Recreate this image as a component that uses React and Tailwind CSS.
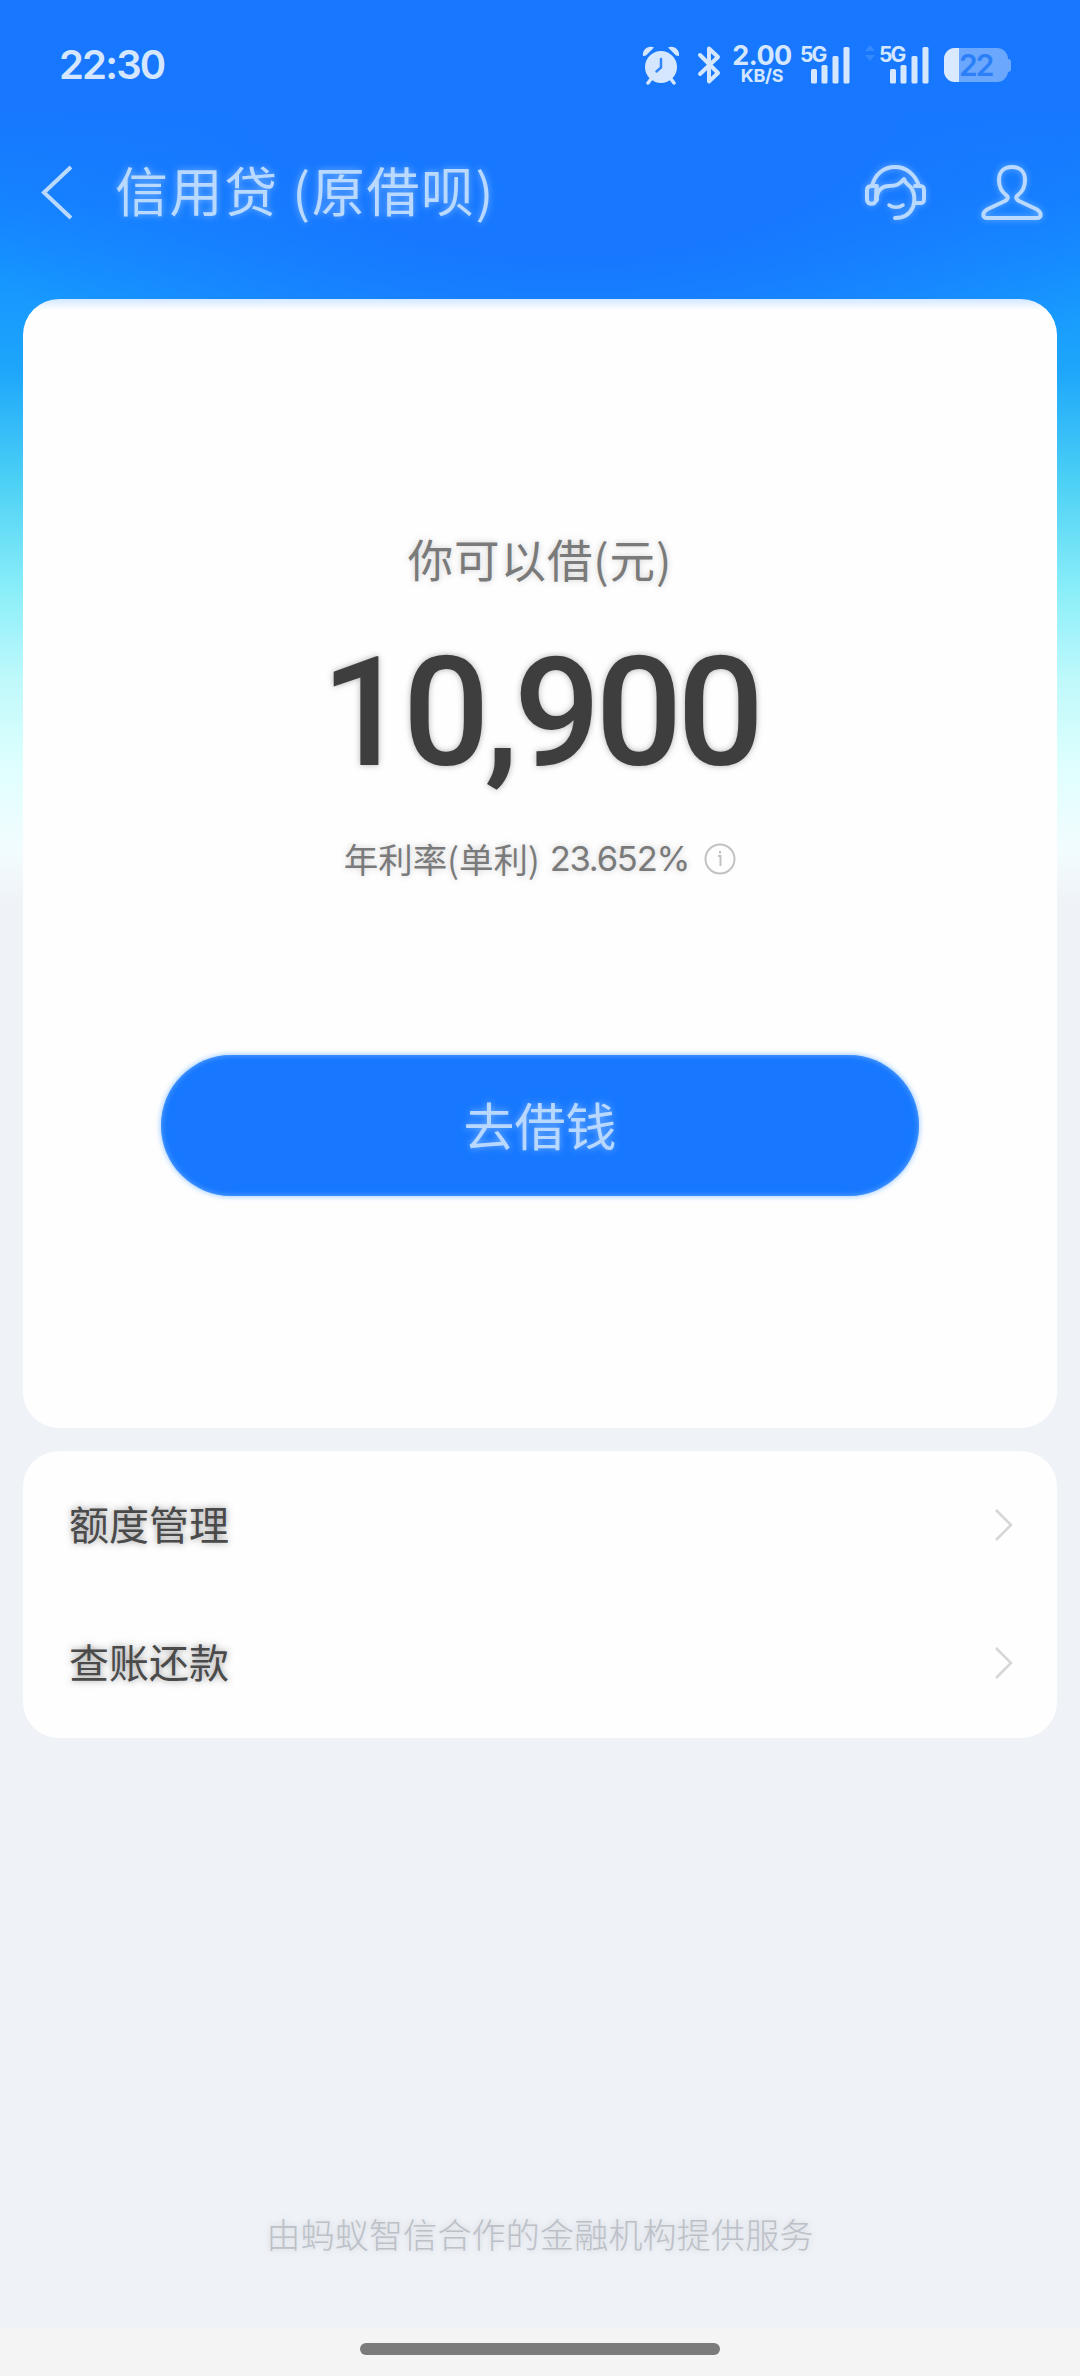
const menuItems = ["额度管理", "查账还款"]

function AlarmIcon() {
    return (
        <svg width="38" height="40" viewBox="0 0 38 40" className="text-[#d5e7fe]">
            <circle cx="19" cy="22" r="16" fill="currentColor" />
            <path d="M1 11C0 5 6 0 12 2.500L4 10.500zM37 11c1-6-5-11-11-8.500l8 8z" fill="currentColor" />
            <path d="m9 34-3 4M29 34l3 4" stroke="currentColor" strokeWidth="3.500" strokeLinecap="round" />
            <path d="M19 14v8.500l-4.500 4" fill="none" stroke="#3484fa" strokeWidth="2.500" strokeLinecap="round" />
        </svg>
    )
}

function BluetoothIcon() {
    return (
        <svg width="24" height="40" viewBox="0 0 24 40" fill="none" stroke="#d5e7fe" strokeWidth="4" strokeLinejoin="round" strokeLinecap="round">
            <path d="m3 10 18 18-9 8.500V3.500L21 12 3 29" />
        </svg>
    )
}

function Signal() {
    return (
        <div className="relative h-[38px] w-[50px]">
            <span className="absolute left-0 -top-[2px] text-[21px] leading-[21px] font-bold tracking-[-2px]">5G</span>
            <svg className="absolute left-[11px] top-[1px]" width="39" height="37" viewBox="0 0 39 37" fill="currentColor">
                <rect x="0" y="22" width="6" height="14.500" rx="1.500" />
                <rect x="10.500" y="18" width="6" height="18.500" rx="1.500" />
                <rect x="21.500" y="9" width="6" height="27.500" rx="1.500" />
                <rect x="32.500" y="0" width="6" height="36.500" rx="1.500" />
            </svg>
        </div>
    )
}

function StatusBar() {
    return (
        <div className="flex h-[130px] items-center pl-[59px] text-[#d5e7fe] font-['Inter',sans-serif]">
            <span className="w-[583px] text-[40px] font-semibold tracking-[-1.8px]">22:30</span>
            <AlarmIcon />
            <div className="ml-[17px]">
                <BluetoothIcon />
            </div>
            <div className="ml-[10px] flex w-[62px] flex-col items-center">
                <span className="text-[27px] leading-[22px] font-bold tracking-[-0.5px]">2.00</span>
                <span className="text-[18px] leading-[18px] font-bold tracking-[-0.3px]">KB/S</span>
            </div>
            <div className="ml-[7px]">
                <Signal />
            </div>
            <svg className="-mt-[24px] ml-[15px] text-[#3389fd]" width="10" height="16" viewBox="0 0 10 16" fill="currentColor">
                <path d="m5 0 5 6H0zM5 16l5-6H0z" />
            </svg>
            <div className="ml-[4px]">
                <Signal />
            </div>
            <div className="ml-[15px] flex items-center">
                <div className="flex h-[34px] w-[64px] items-center rounded-[11px] bg-[#6aa7fd]">
                    <div className="h-[34px] w-[15px] rounded-l-[11px] bg-[#d9e9ff]"></div>
                    <span className="text-[30px] leading-[34px] font-semibold tracking-[-2px] text-[#2b80f8]">22</span>
                </div>
                <div className="h-[13px] w-[3px] rounded-r-full bg-[#6aa7fd]"></div>
            </div>
        </div>
    )
}

function NavBar() {
    return (
        <div className="flex h-[169px] items-start text-[#b9d9ff]">
            <svg className="ml-[38px] mt-[34px]" width="40" height="56" viewBox="0 0 40 56" fill="none" stroke="currentColor" strokeWidth="4">
                <path d="M33 3 6 28.500 33 54" />
            </svg>
            <h1 className="ml-[37px] mt-[19px] w-[750px] text-[53px] leading-[80px] tracking-[1.6px] [text-shadow:0_0_7px_rgba(190,220,255,0.6)]">
                信用贷 (原借呗)
            </h1>
            <svg className="mt-[34px] drop-shadow-[0_0_3px_rgba(190,220,255,0.5)]" width="62" height="58" viewBox="0 0 62 58" fill="none" stroke="currentColor" strokeWidth="4" strokeLinecap="round" strokeLinejoin="round">
                <path d="M7 22C10 10 19 3 30 3s20 7 24 19" />
                <path d="M7 22h5c-1 4-1 8-1 14 0 5-9 5-9 0V26c0-3 2-4 5-4z" />
                <path d="M50 22h5c3 0 4 1 4 4v9c0 3-1 4-4 4h-5" />
                <path d="M12 36c-1-9 5-14 12-14 7 0 10-1 15-7 1 5 5 5 8 10 3 6 3 12 1 18-3 7-9 11-18 11" />
                <path d="M24 41c4 3 10 3 14 0" strokeWidth="3.500" />
            </svg>
            <svg className="ml-[54px] mt-[34px] drop-shadow-[0_0_3px_rgba(190,220,255,0.5)]" width="62" height="58" viewBox="0 0 62 58" fill="none" stroke="currentColor" strokeWidth="4" strokeLinejoin="round">
                <path d="M31 3c8 0 13 5 13 13 0 7-3 12-7 15-3 2-2 4 1 6l17 8c6 3 6 9 1 9H6c-5 0-5-6 1-9l17-8c3-2 4-4 1-6-4-3-7-8-7-15 0-8 5-13 13-13z" />
            </svg>
        </div>
    )
}

function LoanCard() {
    return (
        <div className="flex h-[1129px] flex-col items-center rounded-[36px] bg-[#fefefe] bg-[linear-gradient(180deg,#d3e8ff_0px,#e6f2ff_5px,#fefefe_11px)]">
            <p className="mt-[229px] text-[45.500px] leading-[60px] tracking-[0.9px] text-[#7a7a7a] [text-shadow:0_0_6px_rgba(90,90,90,0.3)]">你可以借(元)</p>
            <p className="mt-[42px] text-[153px] leading-[166px] font-medium tracking-[-5.2px] text-[#3e3e3e] font-['Roboto',sans-serif] [text-shadow:0_0_6px_rgba(60,60,60,0.4)]">
                10,900
            </p>
            <div className="mt-[37px] flex items-center text-[#7a7a7a] [text-shadow:0_0_6px_rgba(90,90,90,0.3)]">
                <span className="-mt-[3px] text-[34.500px] leading-[52px]">年利率(单利)</span>
                <span className="ml-[10px] text-[34.500px] leading-[52px] tracking-[-1.2px] font-['Inter','Noto_Sans_CJK_SC',sans-serif]">23.652%</span>
                <svg className="ml-[15px]" width="32" height="32" viewBox="0 0 32 32" fill="none" stroke="#c2c2c2" strokeWidth="2">
                    <circle cx="16" cy="16" r="14.500" />
                    <path d="M14 13h2.500v10M16 8v2.500" />
                </svg>
            </div>
            <button className="mt-[170px] h-[141px] w-[758px] rounded-full bg-[#1778ff] pb-[3px] text-[51px] text-[#b9d8ff] shadow-[0_0_5px_1px_rgba(140,195,255,0.8),inset_0_0_5px_1px_rgba(120,180,255,0.6)] [text-shadow:0_0_7px_rgba(190,220,255,0.6)]">
                去借钱
            </button>
        </div>
    )
}

function MenuCard() {
    return (
        <div className="mt-[23px] h-[287px] rounded-[36px] bg-[#fefefe] py-[5px] pl-[46px] pr-[44px]">
            {menuItems.map((item) => (
                <div key={item} className="flex h-[138px] items-center justify-between">
                    <span className="-mt-[5px] text-[40px] text-[#4a4a4a] [text-shadow:0_0_7px_rgba(50,50,50,0.5)]">{item}</span>
                    <svg width="19" height="32" viewBox="0 0 19 32" fill="none" stroke="#d6d6d6" strokeWidth="2.500">
                        <path d="m2 1 15 15L2 31" />
                    </svg>
                </div>
            ))}
        </div>
    )
}

function App() {
    return (
        <div className="flex h-[2376px] w-[1080px] flex-col bg-[#eff2f7] bg-[radial-gradient(ellipse_680px_400px_at_570px_60px,#1778ff_0%,#1778ff_50%,rgba(23,120,255,0)_100%),linear-gradient(180deg,#1778ff_0px,#1778ff_110px,#1485ff_200px,#1696ff_280px,#1da6fb_370px,#4bd0f5_480px,#8aeef9_590px,#bff9fb_680px,#e0fffe_770px,#f2fcff_850px,#eff2f7_910px)] font-['Noto_Sans_CJK_SC',sans-serif]">
            <StatusBar />
            <NavBar />
            <div className="px-[23px]">
                <LoanCard />
                <MenuCard />
            </div>
            <p className="mt-auto text-center text-[34px] leading-[50px] font-light tracking-[0.2px] text-[#bcc0c7] [text-shadow:0_0_6px_rgba(140,145,155,0.35)]">
                由蚂蚁智信合作的金融机构提供服务
            </p>
            <div className="mt-[69px] flex h-[48px] justify-center bg-[#f4f4f4] pt-[15px]">
                <div className="h-[12px] w-[360px] rounded-full bg-[#7b7b7b]"></div>
            </div>
        </div>
    )
}

export default App
